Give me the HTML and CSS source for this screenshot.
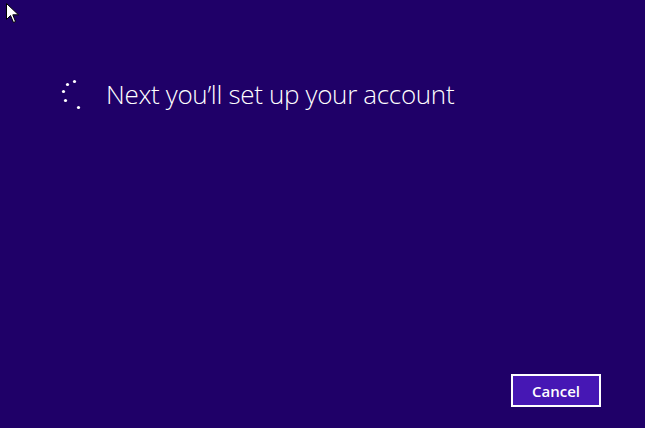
FILE: index.html
```html
<!DOCTYPE html>
<html>
<head>
<meta charset="utf-8">
<link rel="stylesheet" href="styles.css">
</head>
<body>
<div class="screen">
  <div class="header">
    <svg class="spinner" width="24" height="32" viewBox="0 0 24 32">
      <circle cx="17.5" cy="3.5" r="1.6" fill="#fff"/>
      <circle cx="10.5" cy="6.5" r="1.6" fill="#fff"/>
      <circle cx="6.5" cy="13.5" r="1.6" fill="#fff"/>
      <circle cx="8.5" cy="22.5" r="1.6" fill="#fff"/>
      <circle cx="21.5" cy="29.5" r="1.6" fill="#fff"/>
    </svg>
    <h1 class="title">Next you’ll set up your account</h1>
  </div>
  <div class="footer">
    <button class="cancel">Cancel</button>
  </div>
  <svg class="cursor" width="14" height="22" viewBox="0 0 14 22">
    <path d="M0.5 0.5 L0.5 16.5 L4.5 12.5 L7.5 19.5 L9.5 18.5 L6.8 11.8 L12.5 11.8 Z" fill="#fff" stroke="#000" stroke-width="1"/>
  </svg>
</div>
</body>
</html>
```
FILE: styles.css
```css
html, body {
  margin: 0;
  padding: 0;
  background: #1f0068;
}
.screen {
  position: relative;
  width: 645px;
  height: 428px;
  background: #1f0068;
  display: flex;
  flex-direction: column;
  justify-content: space-between;
  overflow: hidden;
}
.header {
  display: flex;
  align-items: center;
  padding: 77px 0 0 57px;
}
.spinner {
  display: block;
  margin-right: 25px;
}
.title {
  margin: 0;
  font-family: "Open Sans", "Liberation Sans", sans-serif;
  font-weight: 300;
  font-size: 26px;
  color: #fff;
  line-height: 34px;
  letter-spacing: -0.32px;
}
.footer {
  display: flex;
  justify-content: flex-end;
  padding: 0 44px 21px 0;
}
.cancel {
  width: 90px;
  height: 33px;
  background: #4617b4;
  border: 2px solid #fff;
  color: #fff;
  font-family: "Open Sans", "Liberation Sans", sans-serif;
  font-weight: 600;
  font-size: 15px;
  padding: 0;
}
.cursor {
  position: absolute;
  left: 6px;
  top: 3px;
}
```
